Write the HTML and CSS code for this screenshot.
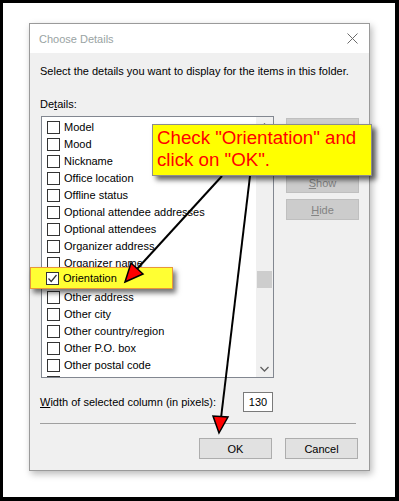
FILE: index.html
```html
<!DOCTYPE html>
<html>
<head>
<meta charset="utf-8">
<link rel="stylesheet" href="styles.css">
</head>
<body>
<div class="frame">
  <div class="dialog">
    <div class="titlebar">
      <span class="title">Choose Details</span>
      <svg class="close" width="11" height="11" viewBox="0 0 11 11"><path d="M0.5 0.5 L10.5 10.5 M10.5 0.5 L0.5 10.5" stroke="#6b6b6b" stroke-width="1" fill="none"/></svg>
    </div>
    <div class="content">
      <p class="intro">Select the details you want to display for the items in this folder.</p>
      <p class="label">De<span class="u">t</span>ails:</p>
      <div class="main">
        <div class="list">
          <div class="rows">
            <div class="row"><span class="cb"></span><span>Model</span></div>
            <div class="row"><span class="cb"></span><span>Mood</span></div>
            <div class="row"><span class="cb"></span><span>Nickname</span></div>
            <div class="row"><span class="cb"></span><span>Office location</span></div>
            <div class="row"><span class="cb"></span><span>Offline status</span></div>
            <div class="row"><span class="cb"></span><span>Optional attendee addresses</span></div>
            <div class="row"><span class="cb"></span><span>Optional attendees</span></div>
            <div class="row"><span class="cb"></span><span>Organizer address</span></div>
            <div class="row"><span class="cb"></span><span>Organizer name</span></div>
            <div class="row"><span class="cb"></span><span>Orientation</span></div>
            <div class="row"><span class="cb"></span><span>Other address</span></div>
            <div class="row"><span class="cb"></span><span>Other city</span></div>
            <div class="row"><span class="cb"></span><span>Other country/region</span></div>
            <div class="row"><span class="cb"></span><span>Other P.O. box</span></div>
            <div class="row"><span class="cb"></span><span>Other postal code</span></div>
            <div class="row"><span class="cb"></span></div>
          </div>
          <div class="scrollbar">
            <div class="sb-btn"><svg width="9" height="6" viewBox="0 0 9 6"><path d="M0.5 5 L4.5 1 L8.5 5" stroke="#606060" stroke-width="1.3" fill="none"/></svg></div>
            <div class="sb-track"><div class="sb-thumb"></div></div>
            <div class="sb-btn"><svg width="9" height="6" viewBox="0 0 9 6"><path d="M0.5 1 L4.5 5 L8.5 1" stroke="#606060" stroke-width="1.3" fill="none"/></svg></div>
          </div>
        </div>
        <div class="side">
          <div class="btn disabled">Move <span class="u">U</span>p</div>
          <div class="btn disabled">Move <span class="u">D</span>own</div>
          <div class="btn disabled"><span class="u">S</span>how</div>
          <div class="btn disabled"><span class="u">H</span>ide</div>
        </div>
      </div>
      <div class="widthrow">
        <span><span class="u">W</span>idth of selected column (in pixels):</span>
        <div class="input">130</div>
      </div>
      <div class="sep"></div>
      <div class="footer">
        <div class="btn action">OK</div>
        <div class="btn action">Cancel</div>
      </div>
    </div>
  </div>

  <div class="highlight">
    <span class="cb checked"><svg width="11" height="11" viewBox="0 0 11 11"><path d="M1.5 5.5 L4.2 8.5 L9.5 2" stroke="#333" stroke-width="1.2" fill="none"/></svg></span>
    <span>Orientation</span>
  </div>

  <svg class="arrows" width="399" height="501" viewBox="0 0 399 501">
    <line x1="222" y1="176" x2="137" y2="269" stroke="#000" stroke-width="2"/>
    <polygon points="125,282 143,274 131,263" fill="#ff0000" stroke="#000" stroke-width="1.5" stroke-linejoin="miter"/>
    <line x1="250" y1="176" x2="221" y2="418" stroke="#000" stroke-width="2"/>
    <polygon points="219,433 228,417 213,416" fill="#ff0000" stroke="#000" stroke-width="1.5" stroke-linejoin="miter"/>
  </svg>

  <div class="callout">Check "Orientation" and<br>click on "OK".</div>
</div>
</body>
</html>
```

FILE: styles.css
```css
* { box-sizing: border-box; }
html, body { margin: 0; padding: 0; background: #fff; }
body { font-family: "Liberation Sans", Arial, sans-serif; font-size: 11px; color: #000; }

.frame {
  position: relative;
  width: 399px;
  height: 501px;
  border-style: solid;
  border-color: #000;
  border-width: 3px 4px 4px 3px;
  background: #fff;
  overflow: hidden;
}

.dialog {
  margin: 20px 0 0 26px;
  width: 341px;
  height: 448px;
  border: 1px solid #9a9a9a;
  background: #f0f0f0;
  box-shadow: 2px 3px 7px rgba(0,0,0,0.28);
  display: flex;
  flex-direction: column;
}

.titlebar {
  height: 29px;
  background: #fff;
  display: flex;
  align-items: center;
  justify-content: space-between;
  padding: 0 11px 0 9px;
}
.title { color: #99a3a3; font-size: 11px; }
.close { display: block; }

.content {
  flex: 1;
  padding: 10px 10px 0 10px;
  display: flex;
  flex-direction: column;
}
.intro { margin: 0; line-height: 16px; white-space: nowrap; }
.label { margin: 17px 0 0 0; line-height: 16px; }
.u { text-decoration: underline; }

.main { display: flex; margin-top: 4px; }
.list {
  margin-left: 1px;
  width: 233px;
  height: 262px;
  border: 1px solid #828790;
  background: #fff;
  display: flex;
  overflow: hidden;
}
.rows { flex: 1; padding-top: 2px; overflow: hidden; }
.row {
  height: 17px;
  display: flex;
  align-items: center;
  gap: 4px;
  padding-left: 5px;
  white-space: nowrap;
  line-height: 17px;
}
.cb {
  flex: none;
  width: 13px;
  height: 13px;
  border: 1px solid #333;
  background: #fff;
  display: flex;
  align-items: center;
  justify-content: center;
}

.scrollbar {
  width: 17px;
  flex: none;
  background: #f0f0f0;
  display: flex;
  flex-direction: column;
}
.sb-btn { height: 17px; display: flex; align-items: center; justify-content: center; flex: none; }
.sb-track { flex: 1; }
.sb-thumb { margin: 137px 1px 0 1px; height: 17px; background: #cdcdcd; }

.side {
  margin-left: 12px;
  margin-top: 2px;
  width: 73px;
  display: flex;
  flex-direction: column;
  gap: 6px;
}
.btn {
  height: 21px;
  display: flex;
  align-items: center;
  justify-content: center;
  border: 1px solid #adadad;
  background: #e1e1e1;
  white-space: nowrap;
}
.btn.disabled { background: #cccccc; border-color: #bfbfbf; color: #838383; }

.widthrow {
  margin-top: 14px;
  height: 20px;
  display: flex;
  align-items: center;
  justify-content: space-between;
  width: 233px;
  white-space: nowrap;
}
.input {
  width: 30px;
  height: 20px;
  border: 1px solid #7a7a7a;
  background: #fff;
  display: flex;
  align-items: center;
  justify-content: center;
}
.sep { margin-top: 11px; height: 1px; width: 316px; background: #a0a0a0; }
.footer {
  margin-top: 14px;
  display: flex;
  justify-content: flex-end;
  gap: 13px;
  width: 318px;
}
.footer .btn { width: 73px; }

.highlight {
  position: absolute;
  left: 27px;
  top: 264px;
  width: 143px;
  height: 22px;
  background: #ffff33;
  border: 1.5px solid #e8963a;
  box-shadow: 3px 4px 5px rgba(0,0,0,0.55);
  display: flex;
  align-items: center;
  gap: 4px;
  padding-left: 15px;
}

.arrows { position: absolute; left: -3px; top: -3px; pointer-events: none; }

.callout {
  position: absolute;
  left: 149px;
  top: 121px;
  width: 220px;
  height: 52px;
  background: #ffff00;
  border: 1.5px solid #8c8c8c;
  box-shadow: 4px 4px 5px rgba(0,0,0,0.6);
  color: #ff0000;
  font-family: "Liberation Sans", Arial, sans-serif;
  font-size: 18.7px;
  line-height: 22px;
  padding: 2px 0 0 4px;
  white-space: nowrap;
}
```
